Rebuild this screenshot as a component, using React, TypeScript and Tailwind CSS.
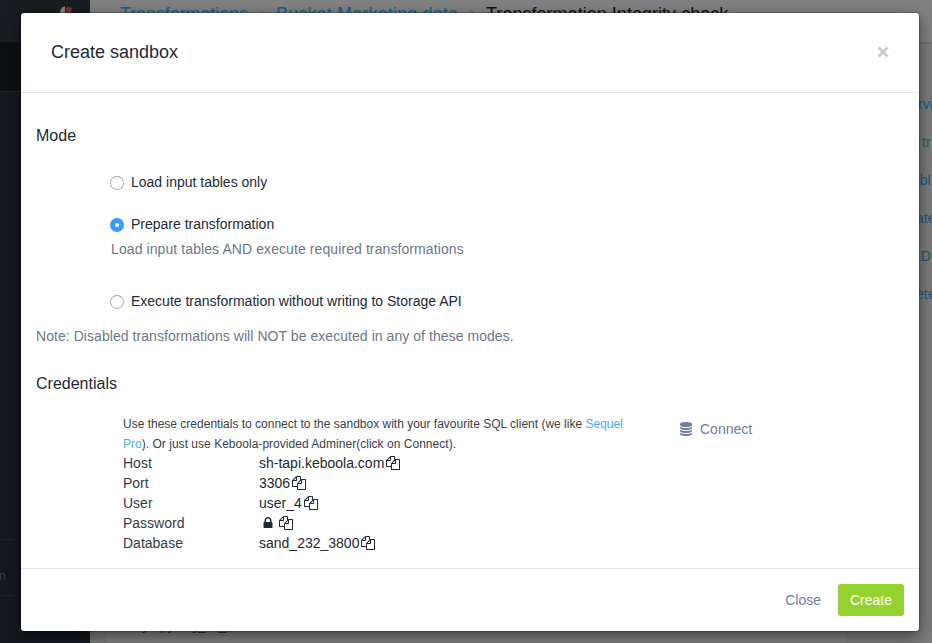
import React from 'react';

const COPY =
  'M1696 384q40 0 68 28t28 68v1216q0 40-28 68t-68 28h-960q-40 0-68-28t-28-68v-288h-544q-40 0-68-28t-28-68v-672q0-40 20-88t48-76l408-408q28-28 76-48t88-20h416q40 0 68 28t28 68v328q68-40 128-40h416zm-544 213l-299 299h299v-299zm-640-384l-299 299h299v-299zm196 647l316-316v-416h-384v416q0 40-28 68t-68 28h-416v640h512v-256q0-40 20-88t48-76zm956 804v-1152h-384v416q0 40-28 68t-68 28h-416v640h896z';
const LOCK =
  'M640 768h512v-192q0-106-75-181t-181-75-181 75-75 181v192zm832 96v576q0 40-28 68t-68 28h-960q-40 0-68-28t-28-68v-576q0-40 28-68t68-28h32v-192q0-184 132-316t316-132 316 132 132 316v192h32q40 0 68 28t28 68z';
const DATABASE =
  'M896 768q237 0 443-43t325-127v170q0 69-103 128t-280 93.5-385 34.5-385-34.5-280-93.5-103-128v-170q119 84 325 127t443 43zm0 768q237 0 443-43t325-127v170q0 69-103 128t-280 93.5-385 34.5-385-34.5-280-93.5-103-128v-170q119 84 325 127t443 43zm0-384q237 0 443-43t325-127v170q0 69-103 128t-280 93.5-385 34.5-385-34.5-280-93.5-103-128v-170q119 84 325 127t443 43zm0-1152q208 0 385 34.5t280 93.5 103 128v128q0 69-103 128t-280 93.5-385 34.5-385-34.5-280-93.5-103-128v-128q0-69 103-128t280-93.5 385-34.5z';

function Icon({ path, className }: { path: string; className: string }) {
  return (
    <svg viewBox="0 0 1792 1792" className={`size-[14px] shrink-0 fill-current ${className}`}>
      <path d={path} />
    </svg>
  );
}

function Radio({ label, checked }: { label: string; checked?: boolean }) {
  return (
    <label className="flex h-5 items-center">
      {checked ? (
        <span className="mt-[2px] flex size-[14px] shrink-0 items-center justify-center rounded-full bg-[#3b99fc]">
          <span className="size-1 rounded-full bg-white" />
        </span>
      ) : (
        <span className="mt-[2px] size-[14px] shrink-0 rounded-full border border-[#b0b0b0] border-t-[#9c9c9c] bg-white" />
      )}
      <span className="ml-[7px] whitespace-nowrap text-[14px] leading-5">{label}</span>
    </label>
  );
}

const credentials = [
  { name: 'Host', value: 'sh-tapi.keboola.com', valueClass: 'w-[127px]' },
  { name: 'Port', value: '3306', valueClass: 'w-[33px]' },
  { name: 'User', value: 'user_4', valueClass: 'w-[45px]' },
  { name: 'Password', value: null, valueClass: '' },
  { name: 'Database', value: 'sand_232_3800', valueClass: 'w-[102px]' },
];

const actions = [
  { text: 'rvi', className: 'pl-[72px]' },
  { text: 'tr', className: 'pl-[76px]' },
  { text: 'abl', className: 'pl-[66px]' },
  { text: 'ate', className: 'pl-[70px]' },
  { text: 'LD', className: 'pl-[67px]' },
  { text: 'ete', className: 'pl-[70px]' },
];

function Page() {
  return (
    <div className="flex h-full">
      <aside className="flex w-[90px] shrink-0 flex-col bg-[#14181d]">
        <div className="flex h-[42px] items-start bg-[#191d22] pl-[60px] pt-[6px]">
          <svg viewBox="0 0 14 12" className="h-3 w-[14px]">
            <path d="M0 12V7Q0 2 5 0V12Z" fill="#858585" />
            <circle cx="8.5" cy="4" r="3.6" fill="#842a30" stroke="#191d22" strokeWidth="0.6" />
          </svg>
        </div>
        <div className="h-[49px] bg-[#0f1014]" />
        <div className="h-[448px] border-t border-[#1d2328]" />
        <div className="h-[57px] border-y border-[#1d2126] pt-[26px] text-[13px] leading-5 text-[#354049]">
          <span className="-ml-[5px] block">m</span>
        </div>
      </aside>
      <main className="flex flex-1 flex-col bg-[#7b7b7b]">
        <header className="flex h-[44px] shrink-0 items-start whitespace-nowrap border-b-2 border-[#777064] bg-[#808080] pl-[30px] pt-[2px] text-[18px] leading-6">
          <span className="flex w-[156px] tracking-[-0.1px] text-[#165f87]">
            Transformations <span className="-mt-[2px] pl-[11px] text-[18px] text-[#68686b]">›</span>
          </span>
          <span className="flex w-[210px] tracking-[0.15px] text-[#165f87]">
            Bucket Marketing data <span className="-mt-[2px] pl-[11px] text-[18px] text-[#68686b]">›</span>
          </span>
          <span className="tracking-[0.03px] text-[#0d1017]">Transformation Integrity check</span>
        </header>
        <div className="flex flex-1">
          <section className="ml-[17px] flex w-[739px] shrink-0 flex-col justify-end bg-[#808080] pb-[10px]">
            <div className="flex h-4 items-end pl-[28px] text-[14px] leading-4 text-[#252a33]">
              <span className="w-[78px]">sys.py-big_</span>
              <Icon path={COPY} className="" />
            </div>
          </section>
          <nav className="flex w-[86px] flex-col pt-[41px]">
            {actions.map((a) => (
              <span
                key={a.text}
                className={`block h-[38px] shrink-0 whitespace-nowrap text-[14px] leading-[38px] text-[#115b82] ${a.className}`}
              >
                {a.text}
              </span>
            ))}
          </nav>
        </div>
      </main>
    </div>
  );
}

export default function App() {
  return (
    <div className="relative h-[643px] w-[932px] overflow-hidden font-['Liberation_Sans',Arial,sans-serif]">
      <Page />
      <div className="absolute left-[21px] top-[13px] flex h-[618px] w-[898px] flex-col rounded-[3px] bg-white text-[#222936] shadow-[0_5px_15px_rgba(0,0,0,0.5),0_0_1px_1px_rgba(0,0,0,0.2)]">
        <div className="flex h-20 shrink-0 items-center justify-between border-b border-[#e4e5eb] px-[30px] pb-[2px]">
          <h2 className="text-[18px] leading-6">Create sandbox</h2>
          <svg viewBox="0 0 12 12" className="size-3 stroke-[#cccccc]" strokeWidth="2.9">
            <path d="M1.5 1.5L10.5 10.5M10.5 1.5L1.5 10.5" />
          </svg>
        </div>
        <div className="flex flex-1 flex-col pl-[15px]">
          <h3 className="mt-[31px] text-[16px] leading-6">Mode</h3>
          <div className="mt-6 flex flex-col pl-[74px]">
            <Radio label="Load input tables only" />
            <div className="h-[22px]" />
            <Radio label="Prepare transformation" checked />
            <p className="mt-[5px] whitespace-nowrap pl-px text-[14px] leading-5 tracking-[0.09px] text-[#6e7689]">
              Load input tables AND execute required transformations
            </p>
            <div className="h-8" />
            <Radio label="Execute transformation without writing to Storage API" />
          </div>
          <p className="mt-[15px] whitespace-nowrap text-[14px] leading-5 tracking-[0.055px] text-[#6e7689]">
            Note: Disabled transformations will NOT be executed in any of these modes.
          </p>
          <h3 className="mt-[26px] text-[16px] leading-6">Credentials</h3>
          <div className="mt-[18px] flex pl-[87px]">
            <div className="w-[557px]">
              <p className="-mb-px whitespace-nowrap text-[12px] leading-5 text-[#3a404c]">
                Use these credentials to connect to the sandbox with your favourite SQL client (we like{' '}
                <span className="text-[#4aabf5]">Sequel</span>
                <br />
                <span className="tracking-[0.025px]">
                  <span className="text-[#4aabf5]">Pro</span>). Or just use Keboola-provided Adminer(click on Connect).
                </span>
              </p>
              {credentials.map((c) => (
                <div key={c.name} className="flex h-5 items-center text-[14px] leading-5">
                  <span className="w-[136px] text-[#343a46]">{c.name}</span>
                  {c.value ? (
                    <span className={`whitespace-nowrap ${c.valueClass}`}>{c.value}</span>
                  ) : (
                    <Icon path={LOCK} className="ml-[2px] mr-1" />
                  )}
                  <Icon path={COPY} className="" />
                </div>
              ))}
            </div>
            <button className="-ml-px flex h-[30px] items-center text-[14px] leading-5 text-[#717d98]">
              <Icon path={DATABASE} className="mr-[7px]" />
              Connect
            </button>
          </div>
        </div>
        <div className="flex h-[63px] shrink-0 items-center justify-end border-t border-[#e4e5eb] pr-[15px] text-[14px]">
          <button className="mr-[17px] leading-5 text-[#717d98]">Close</button>
          <button className="h-8 w-[66px] rounded-[3px] bg-[#96d22d] leading-8 text-white">Create</button>
        </div>
      </div>
    </div>
  );
}
